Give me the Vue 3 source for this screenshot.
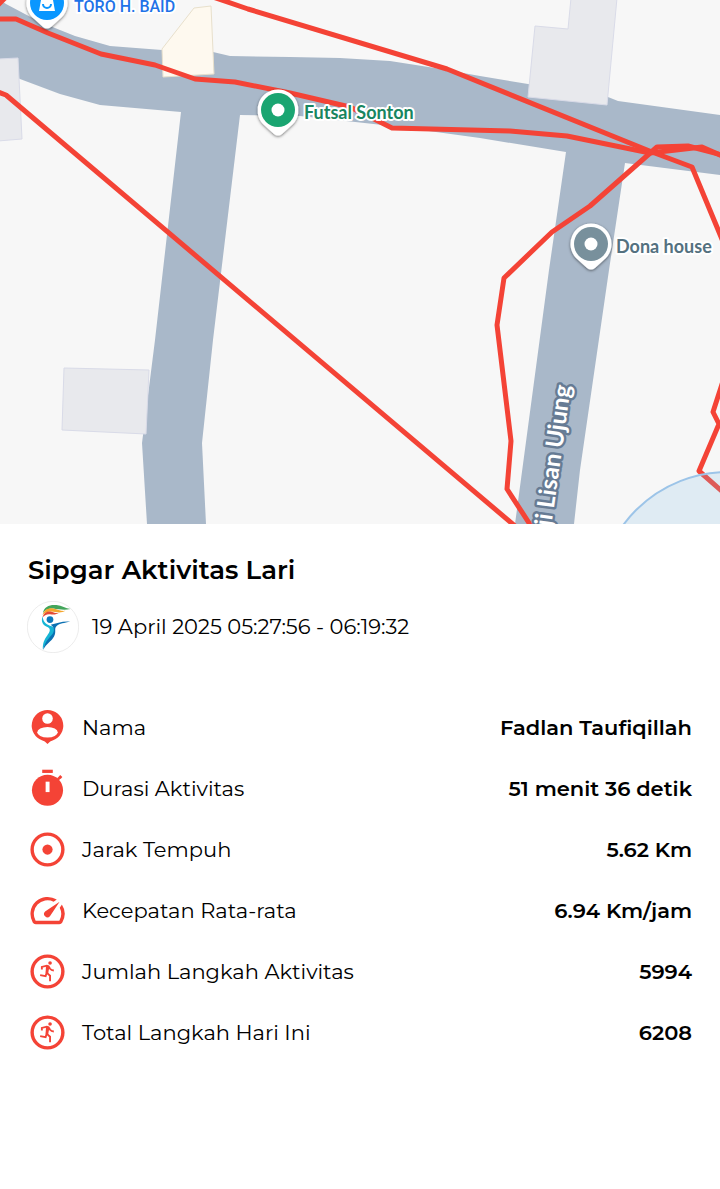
<script setup>
const pins = [
  { x: 278, y: 110, color: '#1aa571', kind: 'dot' },
  { x: 591, y: 244, color: '#78909c', kind: 'dot' },
  { x: 47, y: 3, color: '#0a97ff', kind: 'shop' },
]

const tracks = [
  '-2,19 16,19 48,33 101,54 155,65 195,79 235,82 290,93 350,107 392,128 510,131 567,136 650,153 702,147 722,156',
  '210,-4 248,9 447,69 652,152 692,167 724,244',
  '-2,92 6,95 515,526',
  '531,526 507,489 511,441 497,325 504,278 552,232 590,206 657,147 688,146 722,155',
  '724,378 713,412 719,424 699,471 724,493',
  '-3,6 6,-3',
]

const stats = [
  { icon: 'person', label: 'Nama', value: 'Fadlan Taufiqillah' },
  { icon: 'timer', label: 'Durasi Aktivitas', value: '51 menit 36 detik' },
  { icon: 'target', label: 'Jarak Tempuh', value: '5.62 Km' },
  { icon: 'speed', label: 'Kecepatan Rata-rata', value: '6.94 Km/jam' },
  { icon: 'run', label: 'Jumlah Langkah Aktivitas', value: '5994' },
  { icon: 'run', label: 'Total Langkah Hari Ini', value: '6208' },
]
</script>

<template>
  <main class="page">
    <svg class="map" viewBox="0 0 720 524" role="img" aria-label="Peta rute lari">
      <defs>
        <filter id="pin-shadow" x="-30%" y="-30%" width="160%" height="160%">
          <feDropShadow dx="0" dy="1" stdDeviation="1.5" flood-color="#000" flood-opacity="0.55" />
        </filter>
      </defs>
      <rect width="720" height="524" fill="#f7f7f7" />
      <path
        class="road"
        d="M0 0 6 4 40 22 75 36 110 46 162 50 213 52 230 56 290 57 340 58 390 61 435 68 480 76 528 84 608 97 618 101 720 115V175L625 163 609 270 580 470 574 524H515L549 270 566 152 480 138 392 126 300 116 240 115 213 340 202 443 206 524H147L142 443 155 340 181 112 100 105 60 94 20 79 0 68Z"
      />
      <path class="building" d="M-2 59 18 58 22 139 -2 141Z" />
      <path class="building" d="M64 368 149 370 146 434 62 430Z" />
      <path class="building" d="M571 -2 568 29 535 26 528 97 607 105 617 -2Z" />
      <path class="landmark" d="M211 6 194 8 162 49 163 77 214 74Z" />
      <polyline v-for="(points, i) in tracks" :key="i" class="track" :points="points" />
      <circle class="area" cx="728" cy="602" r="130" />

      <g v-for="pin in pins" :key="pin.x" :transform="`translate(${pin.x} ${pin.y})`">
        <path
          d="M0-20.500A20.500 20.500 0 0 1 15 14L4 24Q0 27-4 24L-15 14A20.500 20.500 0 0 1 0-20.500Z"
          fill="#fff"
          filter="url(#pin-shadow)"
        />
        <circle r="17" :fill="pin.color" />
        <circle v-if="pin.kind === 'dot'" r="6.500" fill="#fff" />
        <g v-else>
          <path d="M-6-3H6L8 8H-8Z" fill="#fff" />
          <path d="M-4-3V-6a4 4 0 0 1 8 0v3" fill="none" stroke="#fff" stroke-width="2" />
          <path d="M-4 1a4 4 0 0 0 8 0" fill="none" stroke="#0a97ff" stroke-width="2" />
        </g>
      </g>

      <text class="place shop" x="74" y="12">TORO H. BAID</text>
      <text class="place futsal" x="304" y="119">Futsal Sonton</text>
      <text class="place house" x="616" y="253">Dona house</text>
      <text class="street" text-anchor="end" transform="translate(571 386) rotate(-82)">ji Lisan Ujung</text>
    </svg>

    <section class="details">
      <h1>Sipgar Aktivitas Lari</h1>
      <div class="when">
        <svg class="logo" viewBox="20 32 154 154" aria-hidden="true">
          <circle cx="97" cy="109" r="76" fill="#fff" stroke="#e2e2e2" stroke-width="2" />
          <path d="M67 68C70 48 88 42 107 44C124 46 134 54 149 56C127 60 113 56 98 54C82 54 74 58 67 68Z" fill="#43a55a" />
          <path d="M66 74C71 57 84 52 98 54C112 56 120 63 134 61C119 70 105 64 92 63C79 63 72 68 66 74Z" fill="#f4a62c" />
          <path d="M66 81C70 66 82 61 93 64C101 67 108 69 115 67C105 74 96 72 88 71C78 70 71 75 66 81Z" fill="#e34a35" />
          <circle cx="88" cy="87" r="10" fill="#0c78b8" />
          <path d="M66 77C60 96 69 104 82 110C91 115 88 124 80 134C71 146 66 158 67 176C72 160 82 153 91 143C105 128 106 114 93 107C80 102 68 97 66 77Z" fill="#16b5d5" />
          <path d="M90 102C107 98 126 91 148 93C130 98 117 98 108 106C99 113 108 123 100 137C92 153 77 157 68 177C71 158 82 145 93 133C103 121 102 110 90 102Z" fill="#0b70b2" />
        </svg>
        <time datetime="2025-04-19T05:27:56">19 April 2025 05:27:56 - 06:19:32</time>
      </div>

      <dl class="stats">
        <div v-for="stat in stats" :key="stat.label" class="stat">
          <svg class="icon" viewBox="0 0 24 24" aria-hidden="true">
            <g v-if="stat.icon === 'person'">
              <path d="M12 1.700a9.200 9.200 0 0 0-3.300 17.800Q10.500 20 12 21.700Q13.500 20 15.300 19.500A9.200 9.200 0 0 0 12 1.700Z" />
              <circle cx="12" cy="6.700" r="3.100" fill="#fff" />
              <ellipse cx="12" cy="14.800" rx="6" ry="3.100" fill="#fff" />
            </g>
            <g v-else-if="stat.icon === 'timer'">
              <path d="M8.900 1h6.200v1.900H8.900Z" />
              <circle cx="12" cy="13" r="9.100" />
              <path d="M18 6.800 19.500 5.200 20.200 5.800" fill="none" stroke="#f44336" stroke-width="1.500" />
              <path d="M10.900 8h2.300v6.100h-2.300Z" fill="#fff" />
            </g>
            <g v-else-if="stat.icon === 'target'">
              <circle class="ring" cx="12" cy="12" r="9" />
              <circle cx="12" cy="12" r="3" />
            </g>
            <path
              v-else-if="stat.icon === 'speed'"
              d="M20.380 8.570l-1.230 1.850a8 8 0 0 1-.22 7.580H5.070A8 8 0 0 1 15.580 6.850l1.850-1.230A10 10 0 0 0 3.350 19a2 2 0 0 0 1.720 1h13.850a2 2 0 0 0 1.740-1 10 10 0 0 0-.27-10.440zm-9.790 6.840a2 2 0 0 0 2.830 0l5.660-8.490-8.490 5.660a2 2 0 0 0 0 2.830z"
            />
            <g v-else>
              <circle class="ring" cx="12" cy="12" r="9" />
              <circle cx="13.500" cy="7" r="1.050" />
              <path class="limb" d="M8.700 10.900V9.300L11.600 8.600 12.600 9 13.500 10.400Q14.200 11.300 15.700 11.400M12.200 9.100 11.500 12.700 13.500 14.500V17.700M11.500 12.700 10.900 14.700 7.700 14.100" />
              <path d="M11.100 8.700 13 9.500 12.400 13.200 10.900 12.800Z" />
            </g>
          </svg>
          <dt>{{ stat.label }}</dt>
          <dd>{{ stat.value }}</dd>
        </div>
      </dl>
    </section>
  </main>
</template>

<style>
body {
  margin: 0;
  background: #fff;
}
</style>

<style scoped>
.page {
  color: #000;
  font-family: Montserrat, Inter, "Liberation Sans", sans-serif;
}

.map {
  display: block;
  width: 100%;
  height: auto;
}

.road {
  fill: #a9b8c9;
}

.building {
  fill: #e8e9ed;
  stroke: #d9dbe8;
  stroke-width: 1;
}

.landmark {
  fill: #fef9ef;
  stroke: #e8e0cc;
  stroke-width: 1;
}

.track {
  fill: none;
  stroke: #f44336;
  stroke-width: 5;
  stroke-linejoin: round;
}

.area {
  fill: rgba(132, 192, 232, 0.2);
  stroke: #9cc4e8;
  stroke-width: 2;
}

.place,
.street {
  font-family: Lato, "Open Sans", sans-serif;
  font-weight: 700;
  paint-order: stroke;
  stroke: #fff;
  stroke-width: 4;
  stroke-linejoin: round;
}

.place {
  font-size: 18px;
}

.shop {
  font-family: Roboto, sans-serif;
  font-size: 16px;
  font-weight: 500;
  fill: #1f73e8;
}

.futsal {
  fill: #188560;
}

.house {
  fill: #547180;
}

.street {
  font-size: 24px;
  fill: #fff;
  stroke: #667b94;
  stroke-width: 5;
}

.details {
  padding: 28px 28px 40px;
}

h1 {
  margin: 0;
  font-size: 26px;
  line-height: 36px;
  font-weight: 600;
}

.when {
  display: flex;
  align-items: center;
  gap: 13px;
  margin-top: 13px;
  font-size: 21px;
  line-height: 28px;
}

.logo {
  flex: none;
  width: 52px;
  height: 52px;
  margin-left: -1px;
}

.stats {
  display: grid;
  gap: 20px;
  margin: 54px 0 0;
}

.stat {
  display: flex;
  align-items: center;
  gap: 14px;
  font-size: 21px;
  line-height: 28px;
}

.icon {
  flex: none;
  width: 41px;
  height: 41px;
  margin-left: -1px;
  fill: #f44336;
}

.ring {
  fill: none;
  stroke: #f44336;
  stroke-width: 2;
}

.limb {
  fill: none;
  stroke: #f44336;
  stroke-width: 1.1;
}

dt {
  flex: 1;
}

dd {
  margin: 0;
  font-weight: 600;
}
</style>
